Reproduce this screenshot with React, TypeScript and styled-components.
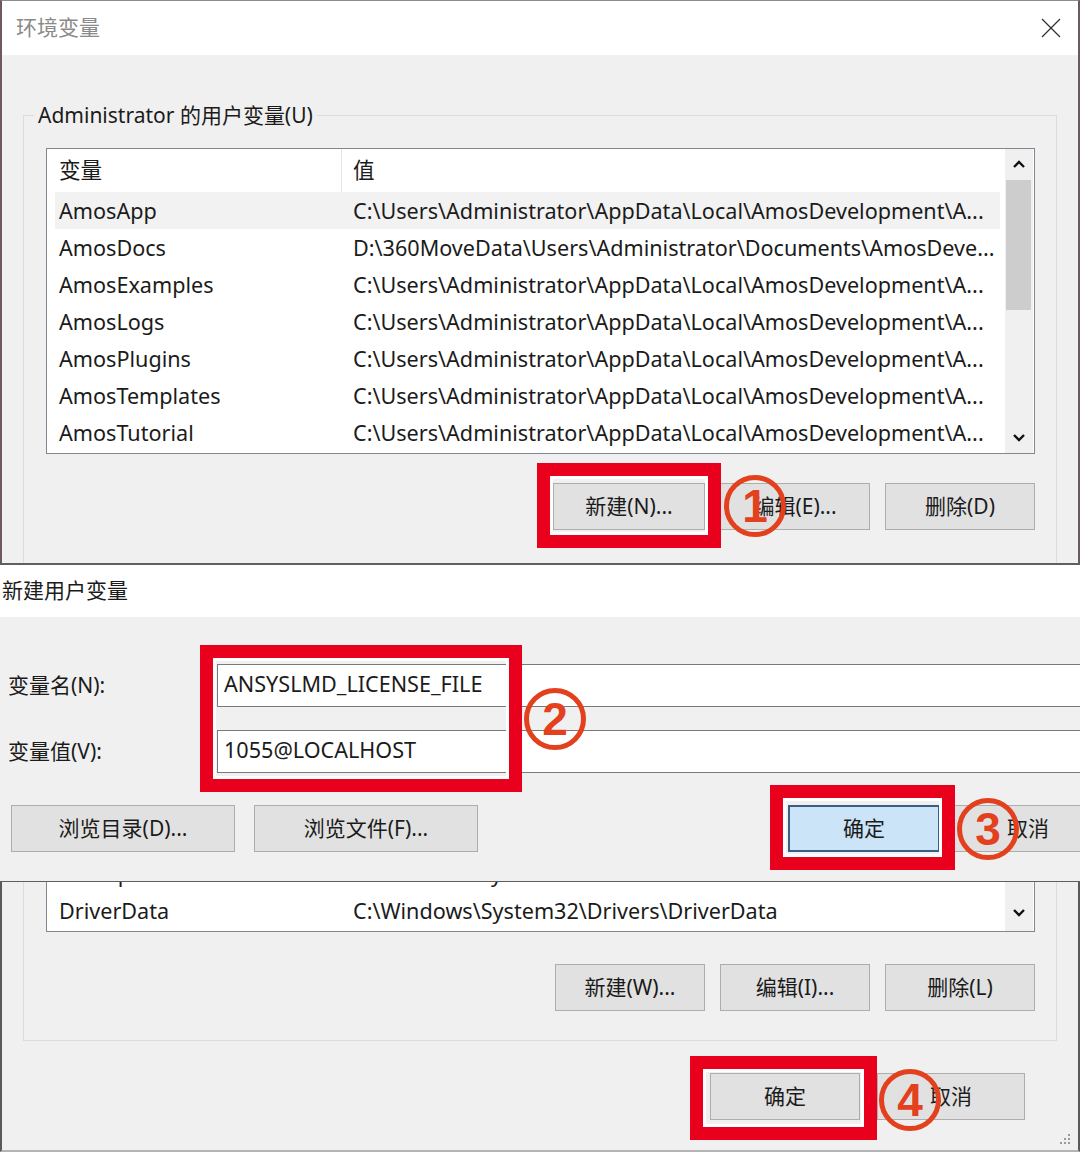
import styled, { createGlobalStyle } from "styled-components";

const GlobalStyle = createGlobalStyle`
  html, body {
    margin: 0;
    padding: 0;
    background: #ffffff;
  }
  body {
    font-family: "Noto Sans", "Noto Sans CJK SC", sans-serif;
    color: #1b1b1b;
  }
`;

const Screen = styled.div`
  width: 1080px;
  height: 1152px;
  overflow: hidden;
  display: flex;
  flex-direction: column;
  font-size: 21.6px;
`;

/* ---------- window chrome ---------- */

const EnvWindow = styled.section`
  flex: none;
  height: 563px;
  box-sizing: border-box;
  display: flex;
  flex-direction: column;
  border-top: 1px solid #8c8c8c;
  border-left: 2px solid #6e5a5c;
  border-right: 2px solid #6e5a5c;
  overflow: hidden;
`;

const TitleBar = styled.header<{ $height: number; $indent: number }>`
  flex: none;
  height: ${(p) => p.$height}px;
  box-sizing: border-box;
  background: #ffffff;
  display: flex;
  align-items: center;
  justify-content: space-between;
  padding: 0 16px 5px ${(p) => p.$indent}px;
`;

const WindowTitle = styled.span<{ $muted?: boolean }>`
  font-size: 21px;
  color: ${(p) => (p.$muted ? "#8a8a8a" : "#1b1b1b")};
`;

const CloseIcon = styled.svg`
  width: 22px;
  height: 22px;
  margin-top: 4px;
`;

const DialogBody = styled.div<{ $pad: string }>`
  flex: 1;
  min-height: 0;
  background: #f0f0f0;
  padding: ${(p) => p.$pad};
  display: flex;
  flex-direction: column;
  overflow: hidden;
`;

/* ---------- group box & list ---------- */

const GroupBox = styled.fieldset`
  margin: 0;
  padding: 0 21px 40px 22px;
  border: 1px solid #dcdcdc;
  min-width: 0;
`;

const GroupTitle = styled.legend`
  margin-left: -12px;
  padding: 0 4px;
  line-height: 28px;
  font-size: 21px;
  color: #1b1b1b;
`;

const GroupTail = styled.div`
  border: 1px solid #dcdcdc;
  border-top: none;
  padding: 0 21px 29px 22px;
`;

const ListBox = styled.div<{ $height: number; $top: number; $cut?: boolean }>`
  margin-top: ${(p) => p.$top}px;
  height: ${(p) => p.$height}px;
  box-sizing: border-box;
  background: #ffffff;
  border: 1px solid #828790;
  border-top: ${(p) => (p.$cut ? "none" : "1px solid #828790")};
  display: flex;
  overflow: hidden;
`;

const Table = styled.div<{ $bottom?: boolean }>`
  flex: 1;
  min-width: 0;
  padding: 0 5px 0 8px;
  display: flex;
  flex-direction: column;
  justify-content: ${(p) => (p.$bottom ? "flex-end" : "flex-start")};
  padding-bottom: ${(p) => (p.$bottom ? 2 : 0)}px;
`;

const HeaderRow = styled.div`
  flex: none;
  height: 43px;
  display: flex;
`;

const HeaderCell = styled.div<{ $first?: boolean }>`
  display: flex;
  align-items: center;
  box-sizing: border-box;
  padding-bottom: 4px;
  width: ${(p) => (p.$first ? "286px" : "auto")};
  flex: ${(p) => (p.$first ? "none" : "1")};
  padding-left: ${(p) => (p.$first ? 4 : 11)}px;
  border-left: ${(p) => (p.$first ? "none" : "1px solid #e5e5e5")};
`;

const Row = styled.div<{ $selected?: boolean }>`
  flex: none;
  height: 37px;
  display: flex;
  align-items: center;
  background: ${(p) => (p.$selected ? "#f2f2f2" : "transparent")};
  white-space: nowrap;
`;

const NameCell = styled.span`
  flex: none;
  width: 286px;
  box-sizing: border-box;
  padding-left: 4px;
`;

const ValueCell = styled.span`
  flex: 1;
  padding-left: 12px;
  overflow: hidden;
`;

const ScrollBar = styled.div<{ $cut?: boolean }>`
  flex: none;
  width: 28px;
  margin-right: 1px;
  background: #f0f0f0;
  display: flex;
  flex-direction: column;
  justify-content: ${(p) => (p.$cut ? "flex-end" : "flex-start")};
`;

const ArrowBox = styled.div<{ $h?: number }>`
  flex: none;
  height: ${(p) => p.$h || 30}px;
  display: flex;
  align-items: center;
  justify-content: center;
`;

const Thumb = styled.div`
  flex: none;
  height: 130px;
  margin: 1px 2px 0 1px;
  background: #cdcdcd;
`;

const Track = styled.div`
  flex: 1;
`;

/* ---------- buttons ---------- */

const ButtonRow = styled.div<{ $top: number; $pad?: string }>`
  margin-top: ${(p) => p.$top}px;
  padding: ${(p) => p.$pad || "0"};
  display: flex;
  justify-content: flex-end;
  gap: 15px;
`;

const FormButtonRow = styled.div`
  margin-top: 32px;
  padding-left: 11px;
  display: flex;
  align-items: center;
  flex-wrap: nowrap;
`;

const Button = styled.div<{ $w: number; $primary?: boolean; $gap?: number }>`
  flex: none;
  width: ${(p) => p.$w}px;
  height: 47px;
  box-sizing: border-box;
  padding-bottom: 3px;
  margin-left: ${(p) => p.$gap || 0}px;
  background: ${(p) => (p.$primary ? "#cce4f7" : "#e1e1e1")};
  border: ${(p) => (p.$primary ? "2px solid #3b5d82" : "1px solid #adadad")};
  display: flex;
  align-items: center;
  justify-content: center;
  font-size: 21px;
  color: #1b1b1b;
  white-space: nowrap;
`;

/* ---------- new variable dialog ---------- */

const NewVarDialog = styled.section`
  flex: none;
  height: 319px;
  box-sizing: border-box;
  border-top: 2px solid #5f5f5f;
  border-bottom: 1px solid #5f5f5f;
  display: flex;
  flex-direction: column;
  overflow: hidden;
`;

const FormGrid = styled.div`
  display: flex;
`;

const LabelColumn = styled.div`
  flex: none;
  width: 217px;
  box-sizing: border-box;
  padding-left: 8px;
  display: flex;
  flex-direction: column;
  gap: 23px;
`;

const FieldLabel = styled.div`
  height: 43px;
  box-sizing: border-box;
  padding-bottom: 4px;
  display: flex;
  align-items: center;
  font-size: 21px;
`;

const FieldColumn = styled.div`
  flex: 1;
  position: relative;
  display: flex;
  flex-direction: column;
  gap: 23px;
`;

const TextField = styled.div`
  height: 43px;
  box-sizing: border-box;
  background: #ffffff;
  border: 1px solid #7a7a7a;
  border-right: none;
  padding: 0 0 4px 6px;
  display: flex;
  align-items: center;
  white-space: nowrap;
`;

/* ---------- bottom part of the env window ---------- */

const EnvTail = styled.section`
  flex: 1;
  position: relative;
  background: #f0f0f0;
  border-left: 2px solid #5a5a5a;
  border-right: 2px solid #5a5a5a;
  border-bottom: 2px solid #b4b4b4;
  padding: 0 21px;
  display: flex;
  flex-direction: column;
`;

const ResizeGrip = styled.svg`
  position: absolute;
  right: 6px;
  bottom: 4px;
  width: 14px;
  height: 14px;
`;

/* ---------- annotations ---------- */

const Marked = styled.div<{ $gap?: number }>`
  position: relative;
  flex: none;
  margin-left: ${(p) => p.$gap || 0}px;
`;

const RedFrame = styled.span<{ $l: number; $t: number; $w: number; $h: number }>`
  position: absolute;
  left: ${(p) => p.$l}px;
  top: ${(p) => p.$t}px;
  width: ${(p) => p.$w}px;
  height: ${(p) => p.$h}px;
  box-sizing: border-box;
  border: 13px solid #e8001c;
  box-shadow: inset 0 0 0 3px #ffffff;
  pointer-events: none;
`;

const StepBadge = styled.span<{ $l: number; $t: number }>`
  position: absolute;
  left: ${(p) => p.$l}px;
  top: ${(p) => p.$t}px;
  width: 62px;
  height: 62px;
  box-sizing: border-box;
  border: 5px solid #e3401e;
  border-radius: 50%;
  display: flex;
  align-items: center;
  justify-content: center;
  font-family: "Liberation Sans", Arial, sans-serif;
  font-weight: bold;
  font-size: 46px;
  line-height: 1;
  color: #e3401e;
  z-index: 2;
`;

const Chevron = ({ up }: { up?: boolean }) => (
  <svg width="14" height="10" viewBox="0 0 14 10">
    <polyline
      points={up ? "2,8 7,3 12,8" : "2,2 7,7 12,2"}
      fill="none"
      stroke="#111"
      strokeWidth="2.4"
    />
  </svg>
);

const userVars = [
  ["AmosApp", "C:\\Users\\Administrator\\AppData\\Local\\AmosDevelopment\\A..."],
  ["AmosDocs", "D:\\360MoveData\\Users\\Administrator\\Documents\\AmosDeve..."],
  ["AmosExamples", "C:\\Users\\Administrator\\AppData\\Local\\AmosDevelopment\\A..."],
  ["AmosLogs", "C:\\Users\\Administrator\\AppData\\Local\\AmosDevelopment\\A..."],
  ["AmosPlugins", "C:\\Users\\Administrator\\AppData\\Local\\AmosDevelopment\\A..."],
  ["AmosTemplates", "C:\\Users\\Administrator\\AppData\\Local\\AmosDevelopment\\A..."],
  ["AmosTutorial", "C:\\Users\\Administrator\\AppData\\Local\\AmosDevelopment\\A..."],
];

const systemVars = [
  ["ComSpec", "C:\\Windows\\system32\\cmd.exe"],
  ["DriverData", "C:\\Windows\\System32\\Drivers\\DriverData"],
];

export default function App() {
  return (
    <>
      <GlobalStyle />
      <Screen>
        <EnvWindow>
          <TitleBar $height={54} $indent={14}>
            <WindowTitle $muted>环境变量</WindowTitle>
            <CloseIcon viewBox="0 0 22 22">
              <line x1="2" y1="2" x2="20" y2="20" stroke="#333" strokeWidth="1.3" />
              <line x1="20" y1="2" x2="2" y2="20" stroke="#333" strokeWidth="1.3" />
            </CloseIcon>
          </TitleBar>
          <DialogBody $pad="46px 21px 0 21px">
            <GroupBox>
              <GroupTitle>Administrator 的用户变量(U)</GroupTitle>
              <ListBox $height={306} $top={19}>
                <Table>
                  <HeaderRow>
                    <HeaderCell $first>变量</HeaderCell>
                    <HeaderCell>值</HeaderCell>
                  </HeaderRow>
                  {userVars.map(([name, value], i) => (
                    <Row key={name} $selected={i === 0}>
                      <NameCell>{name}</NameCell>
                      <ValueCell>{value}</ValueCell>
                    </Row>
                  ))}
                </Table>
                <ScrollBar>
                  <ArrowBox>
                    <Chevron up />
                  </ArrowBox>
                  <Thumb />
                  <Track />
                  <ArrowBox>
                    <Chevron />
                  </ArrowBox>
                </ScrollBar>
              </ListBox>
              <ButtonRow $top={29}>
                <Marked>
                  <Button $w={152}>新建(N)...</Button>
                  <RedFrame $l={-16} $t={-20} $w={184} $h={85} />
                  <StepBadge $l={171} $t={-8}>1</StepBadge>
                </Marked>
                <Button $w={150}>编辑(E)...</Button>
                <Button $w={150}>删除(D)</Button>
              </ButtonRow>
            </GroupBox>
          </DialogBody>
        </EnvWindow>

        <NewVarDialog>
          <TitleBar $height={52} $indent={2}>
            <WindowTitle>新建用户变量</WindowTitle>
          </TitleBar>
          <DialogBody $pad="47px 0 0 0">
            <FormGrid>
              <LabelColumn>
                <FieldLabel>变量名(N):</FieldLabel>
                <FieldLabel>变量值(V):</FieldLabel>
              </LabelColumn>
              <FieldColumn>
                <TextField>ANSYSLMD_LICENSE_FILE</TextField>
                <TextField>1055@LOCALHOST</TextField>
                <RedFrame $l={-17} $t={-19} $w={322} $h={147} />
                <StepBadge $l={307} $t={24}>2</StepBadge>
              </FieldColumn>
            </FormGrid>
            <FormButtonRow>
              <Button $w={224}>浏览目录(D)...</Button>
              <Button $w={224} $gap={19}>浏览文件(F)...</Button>
              <Marked $gap={310}>
                <Button $w={152} $primary>确定</Button>
                <RedFrame $l={-18} $t={-20} $w={185} $h={85} />
                <StepBadge $l={169} $t={-7}>3</StepBadge>
              </Marked>
              <Button $w={152} $gap={12}>取消</Button>
            </FormButtonRow>
          </DialogBody>
        </NewVarDialog>

        <EnvTail>
          <GroupTail>
            <ListBox $height={50} $top={0} $cut>
              <Table $bottom>
                {systemVars.map(([name, value]) => (
                  <Row key={name}>
                    <NameCell>{name}</NameCell>
                    <ValueCell>{value}</ValueCell>
                  </Row>
                ))}
              </Table>
              <ScrollBar $cut>
                <ArrowBox $h={36}>
                  <Chevron />
                </ArrowBox>
              </ScrollBar>
            </ListBox>
            <ButtonRow $top={32}>
              <Button $w={150}>新建(W)...</Button>
              <Button $w={150}>编辑(I)...</Button>
              <Button $w={150}>删除(L)</Button>
            </ButtonRow>
          </GroupTail>
          <ButtonRow $top={32} $pad="0 32px 0 0">
            <Marked>
              <Button $w={150}>确定</Button>
              <RedFrame $l={-20} $t={-17} $w={187} $h={84} />
              <StepBadge $l={169} $t={-4}>4</StepBadge>
            </Marked>
            <Button $w={148} $gap={2}>取消</Button>
          </ButtonRow>
          <ResizeGrip viewBox="0 0 14 14">
            {[
              [11, 3],
              [11, 7],
              [7, 7],
              [11, 11],
              [7, 11],
              [3, 11],
            ].map(([cx, cy]) => (
              <rect key={`${cx}-${cy}`} x={cx - 1} y={cy - 1} width="2" height="2" fill="#9a9a9a" />
            ))}
          </ResizeGrip>
        </EnvTail>
      </Screen>
    </>
  );
}
